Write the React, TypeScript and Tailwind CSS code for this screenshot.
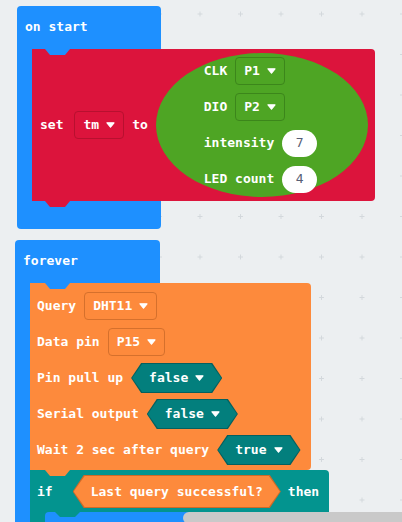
import React from "react";

// MakeCode workspace: "on start" + "forever" stacks on a dotted grid.
const font = "font-['DejaVu_Sans_Mono','Liberation_Mono',monospace] font-bold text-[13px] leading-[16px] text-white";

function Caret() {
  return (
    <svg width="9" height="6" viewBox="0 0 9 6" className="shrink-0">
      <path d="M1 0.8h7l-3.5 4.4z" fill="#fff" stroke="#fff" strokeLinejoin="round" strokeWidth="1.2" />
    </svg>
  );
}

function Drop({ text, edge }: { text: string; edge: string }) {
  return (
    <span className={`flex h-[28px] items-center gap-[7px] rounded-[4px] border px-[8px] ${edge}`}>
      {text}
      <Caret />
    </span>
  );
}

function Pill({ value }: { value: string }) {
  return (
    <span className="flex h-[27px] w-[35px] items-center justify-center rounded-full bg-white font-normal text-[#575e75]">
      {value}
    </span>
  );
}

function BoolHex({ text }: { text: string }) {
  return (
    <span className="relative flex h-[30px] items-center gap-[7px] px-[18px]">
      <span className="absolute inset-0 bg-[#04605f] [clip-path:polygon(10px_0,calc(100%_-_10px)_0,100%_50%,calc(100%_-_10px)_100%,10px_100%,0_50%)]" />
      <span className="absolute inset-[1px] bg-[#037f7d] [clip-path:polygon(10px_0,calc(100%_-_10px)_0,100%_50%,calc(100%_-_10px)_100%,10px_100%,0_50%)]" />
      <span className="relative">{text}</span>
      <span className="relative">
        <Caret />
      </span>
    </span>
  );
}

function Grid() {
  return (
    <svg className="absolute inset-0" width="402" height="522">
      <defs>
        <pattern id="grid" x="17.75" y="-6.25" width="40.5" height="40.5" patternUnits="userSpaceOnUse">
          <path d="M17.75 20.25h5M20.25 17.75v5" stroke="#d3d8dc" strokeWidth="1" />
        </pattern>
      </defs>
      <rect width="402" height="522" fill="url(#grid)" />
    </svg>
  );
}

export default function App() {
  return (
    <div className={`relative h-[522px] w-[402px] overflow-hidden bg-[#eceff1] ${font}`}>
      <Grid />

      {/* on start */}
      <div className="absolute left-[17px] top-[6px] flex flex-col">
        <div className="h-[43px] w-[144px] rounded-t-[4px] bg-[#1e90ff] pl-[8px] pt-[13px]">on start</div>
        <div className="flex">
          <div className="w-[15px] bg-[#1e90ff]" />
          <div className="relative flex h-[152px] w-[343px] items-center rounded-r-[4px] bg-[#dc143c] pl-[8px]">
            <span className="absolute left-[13px] top-0 h-[6px] w-[25px] bg-[#1e90ff] [clip-path:polygon(0_0,100%_0,80%_100%,20%_100%)]" />
            <span className="absolute left-[13px] top-full z-10 h-[6px] w-[25px] bg-[#dc143c] [clip-path:polygon(0_0,100%_0,80%_100%,20%_100%)]" />
            <span>set</span>
            <span className="ml-[11px]">
              <Drop text="tm" edge="border-[#b8102f]" />
            </span>
            <span className="ml-[8px]">to</span>
            <div className="ml-[8px] flex h-[144px] w-[212px] flex-col justify-center gap-[8px] rounded-[50%] bg-[#4ea524] pl-[48px]">
              <div className="flex items-center gap-[8px]">
                CLK <Drop text="P1" edge="border-[#3c861b]" />
              </div>
              <div className="flex items-center gap-[8px]">
                DIO <Drop text="P2" edge="border-[#3c861b]" />
              </div>
              <div className="flex h-[28px] items-center gap-[8px]">
                intensity <Pill value="7" />
              </div>
              <div className="flex h-[28px] items-center gap-[8px]">
                LED count <Pill value="4" />
              </div>
            </div>
          </div>
        </div>
        <div className="h-[28px] w-[144px] rounded-b-[4px] bg-[#1e90ff]" />
      </div>

      {/* forever */}
      <div className="absolute left-[15px] top-[240px] flex flex-col">
        <div className="h-[43px] w-[145px] rounded-t-[4px] bg-[#1e90ff] pl-[8px] pt-[13px]">forever</div>
        <div className="flex">
          <div className="w-[15px] bg-[#1e90ff]" />
          <div className="flex flex-col">
            <div className="relative z-10 flex h-[187px] w-[281px] flex-col gap-[6px] rounded-r-[4px] bg-[#fd8a3c] pl-[7px] pt-[8px]">
              <span className="absolute left-[15px] top-0 h-[6px] w-[25px] bg-[#1e90ff] [clip-path:polygon(0_0,100%_0,80%_100%,20%_100%)]" />
              <span className="absolute left-[15px] top-full h-[6px] w-[25px] bg-[#fd8a3c] [clip-path:polygon(0_0,100%_0,80%_100%,20%_100%)]" />
              <div className="flex h-[30px] items-center gap-[8px]">
                Query <Drop text="DHT11" edge="border-[#d5702c]" />
              </div>
              <div className="flex h-[30px] items-center gap-[8px]">
                Data pin <Drop text="P15" edge="border-[#d5702c]" />
              </div>
              <div className="flex h-[30px] items-center gap-[8px]">
                Pin pull up <BoolHex text="false" />
              </div>
              <div className="flex h-[30px] items-center gap-[8px]">
                Serial output <BoolHex text="false" />
              </div>
              <div className="flex h-[30px] items-center gap-[8px]">
                Wait 2 sec after query <BoolHex text="true" />
              </div>
            </div>

            <div className="flex w-[299px] flex-col rounded-r-[4px] bg-[#03948f]">
              <div className="flex h-[42px] items-center pl-[7px] pt-[1px]">
                <span>if</span>
                <span className="relative ml-[20px] flex h-[33px] items-center px-[18px]">
                  <span className="absolute inset-0 bg-[#cf6a27] [clip-path:polygon(11px_0,calc(100%_-_11px)_0,100%_50%,calc(100%_-_11px)_100%,11px_100%,0_50%)]" />
                  <span className="absolute inset-[1px] bg-[#fd8a3c] [clip-path:polygon(11px_0,calc(100%_-_11px)_0,100%_50%,calc(100%_-_11px)_100%,11px_100%,0_50%)]" />
                  <span className="relative">Last query successful?</span>
                </span>
                <span className="ml-[7px]">then</span>
              </div>
              <div className="flex">
                <div className="w-[15px]" />
                <div className="relative h-[30px] w-[240px] rounded-[4px] bg-[#1e90ff]">
                  <span className="absolute left-[10px] top-0 h-[5px] w-[25px] bg-[#03948f] [clip-path:polygon(0_0,100%_0,80%_100%,20%_100%)]" />
                </div>
              </div>
            </div>
          </div>
        </div>
      </div>

      {/* horizontal scrollbar */}
      <div className="absolute left-[183px] top-[512px] h-[12px] w-[240px] rounded-full bg-[#c9c9c9]" />
    </div>
  );
}
